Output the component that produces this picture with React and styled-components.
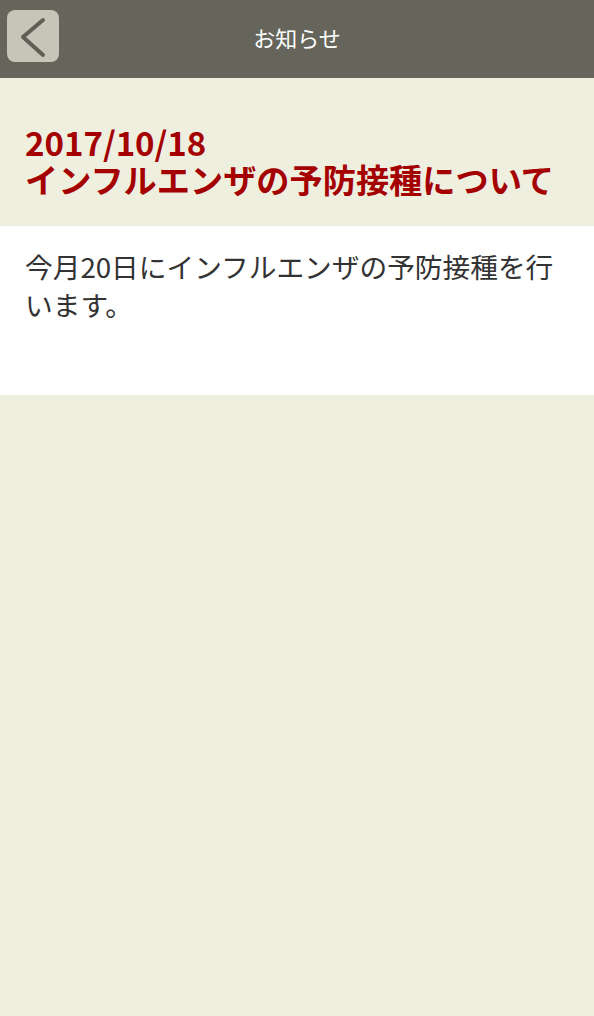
import React from 'react'
import styled, { createGlobalStyle } from 'styled-components'

const GlobalStyle = createGlobalStyle`
  html, body {
    margin: 0;
    padding: 0;
    background: #efefe0;
  }
  body {
    font-family: "Noto Sans CJK JP", "Noto Sans", sans-serif;
  }
`

const Page = styled.div`
  min-height: 1016px;
  background: #efefe0;
`

const Header = styled.header`
  position: relative;
  height: 78px;
  box-sizing: border-box;
  padding-bottom: 4px;
  background: #65655b;
  display: flex;
  align-items: center;
  justify-content: center;
`

const BackButton = styled.button`
  position: absolute;
  left: 7px;
  top: 10px;
  width: 52px;
  height: 52px;
  border: none;
  border-radius: 8px;
  background: #c5c6b8;
  padding: 0;
  display: flex;
  align-items: center;
  justify-content: center;
  cursor: pointer;
`

const HeaderTitle = styled.h1`
  margin: 0;
  font-size: 22px;
  font-weight: 400;
  color: #ffffff;
  line-height: 1;
`

const TitleBlock = styled.section`
  padding: 46px 25px 22px;
  height: 148px;
  box-sizing: border-box;
`

const NewsDate = styled.div`
  font-size: 33px;
  line-height: 36px;
  font-weight: 700;
  color: #a50000;
`

const NewsTitle = styled.h2`
  margin: 0;
  font-size: 33.2px;
  line-height: 38px;
  font-weight: 700;
  color: #a50000;
  white-space: nowrap;
`

const BodyBlock = styled.section`
  background: #ffffff;
  height: 169px;
  box-sizing: border-box;
  padding: 21px 25px;
`

const BodyText = styled.p`
  margin: 0;
  font-size: 27.7px;
  line-height: 38px;
  color: #333333;
`

const ChevronLeft = () => (
  <svg width="52" height="52" viewBox="0 0 52 52">
    <path
      d="M36 10 L16 27 L36 45"
      fill="none"
      stroke="#5f5f55"
      strokeWidth="4"
      strokeLinecap="round"
      strokeLinejoin="round"
    />
  </svg>
)

const App = () => {
  return (
    <Page>
      <GlobalStyle />
      <Header>
        <BackButton aria-label="戻る">
          <ChevronLeft />
        </BackButton>
        <HeaderTitle>お知らせ</HeaderTitle>
      </Header>
      <TitleBlock>
        <NewsDate>2017/10/18</NewsDate>
        <NewsTitle>インフルエンザの予防接種について</NewsTitle>
      </TitleBlock>
      <BodyBlock>
        <BodyText>今月20日にインフルエンザの予防接種を行います。</BodyText>
      </BodyBlock>
    </Page>
  )
}

export default App
